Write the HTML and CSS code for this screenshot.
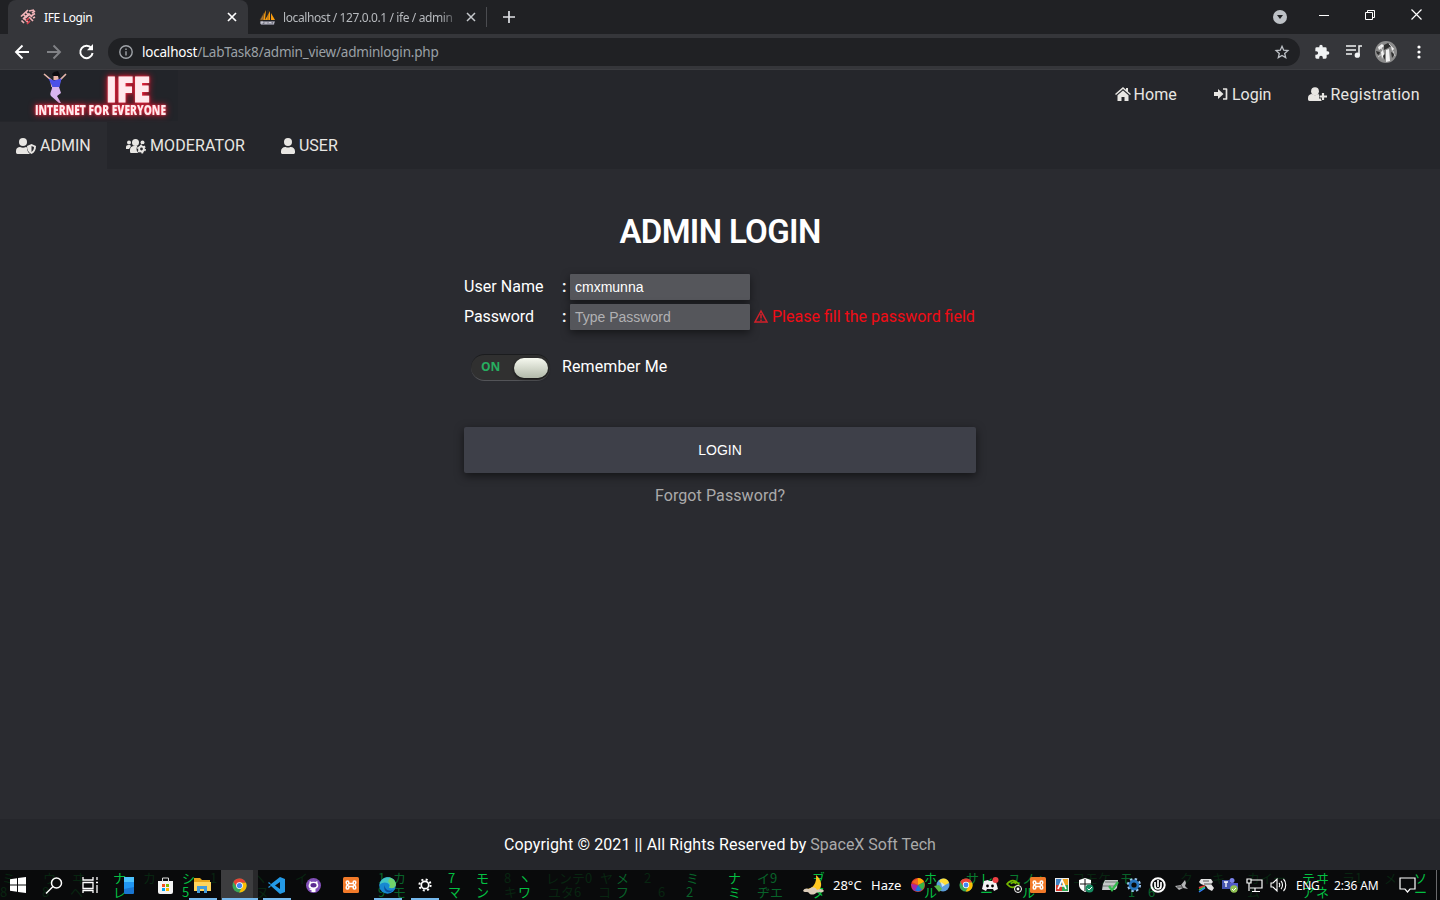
FILE: index.html
```html
<!DOCTYPE html>
<html lang="en">
<head>
<meta charset="utf-8">
<title>IFE Login</title>
<link rel="stylesheet" href="styles.css">
</head>
<body>
<svg width="0" height="0" class="defs">
  <symbol id="user" viewBox="0 0 448 512"><path d="M224 256a128 128 0 1 0 0-256 128 128 0 0 0 0 256zm90 32h-17a174 174 0 0 1-146 0h-17C60 288 0 348 0 422v42c0 26 22 48 48 48h352c26 0 48-22 48-48v-42c0-74-60-134-134-134z"/></symbol>
  <symbol id="chrome" viewBox="0 0 16 16"><circle cx="8" cy="8" r="7.500" fill="#3aa757"/><path d="M1.500 4.300A7.500 7.500 0 0 1 14.800 5H8L5 9.500z" fill="#e94235"/><path d="M8 5h6.900A7.500 7.500 0 0 1 7.600 15.500L11 9.500z" fill="#fbbc04"/><circle cx="8" cy="8" r="3.600" fill="#fff"/><circle cx="8" cy="8" r="2.800" fill="#4285f4"/></symbol>
  <symbol id="xampp" viewBox="0 0 16 16"><rect width="16" height="16" rx="1.500" fill="#f27a29"/><path d="M3.200 5.300c0-1.700 2.600-1.700 2.600 0v1.200h4.400V5.300c0-1.700 2.600-1.700 2.600 0 0 1.500-.6 2.200-1.600 2.700 1 .5 1.600 1.200 1.600 2.700 0 1.700-2.600 1.700-2.600 0V9.500H5.800v1.200c0 1.700-2.600 1.700-2.600 0 0-1.500.6-2.200 1.600-2.700-1-.5-1.600-1.200-1.600-2.700z" fill="#f27a29" stroke="#fff" stroke-width="1.500"/></symbol>
</svg>

<div class="screen">
  <div class="tabstrip">
    <div class="tab active">
      <svg width="16" height="16" viewBox="0 0 16 16" fill="none" stroke="#f3b5b9" stroke-width="1.700"><path d="M1 7.500L8 1M3.500 5.500L6 8M6 3.500L8.500 6M5 9l4-3.500"/><path d="M3 10l6-5 3 3M1.500 11.500L4 14M4 9.500l4 4M9 8l4 4M9 2l5-1M12 4l3-2M11 7l4-2.500M13 9l2-1"/><path d="M6 12l3-3M7 15l3-3" stroke="#d7404d"/></svg>
      <span class="tabname">IFE Login</span>
      <svg class="x" width="10" height="10" viewBox="0 0 10 10" stroke="#fff" stroke-width="1.700"><path d="M1 1l8 8M9 1L1 9"/></svg>
    </div>
    <div class="tab second">
      <svg width="17" height="17" viewBox="0 0 17 17"><path d="M7 1L2 11h4zM11 2L6 11h5zM12 4v7h4z" fill="#f89c0e"/><path d="M5 4L1 11h3zM9 1v10" fill="#b07a35" stroke="#604522" stroke-width=".6"/><path d="M1 12h15l-1 4H2z" fill="#73737f"/><path d="M2 15v-2h2v1H2m4 1v-2m0 1h2m0-1v2m2 0v-2l1 1 1-1v2m2 0l1-2" stroke="#dddde9" fill="none" stroke-width=".8"/></svg>
      <span class="tabname long">localhost / 127.0.0.1 / ife / admin</span>
      <svg class="x" width="10" height="10" viewBox="0 0 10 10" stroke="#c5c8cc" stroke-width="1.500"><path d="M1 1l8 8M9 1L1 9"/></svg>
    </div>
    <svg class="plus" width="12" height="12" viewBox="0 0 12 12" stroke="#dfe1e5" stroke-width="1.700"><path d="M6 0v12M0 6h12"/></svg>
    <div class="window-buttons">
      <svg class="drop" width="14" height="14" viewBox="0 0 14 14"><circle cx="7" cy="7" r="7" fill="#bdc1c6"/><path d="M4 5h6l-3 4z" fill="#202124"/></svg>
      <svg width="10" height="10" viewBox="0 0 10 10"><path d="M0 5.500h10" stroke="#fff"/></svg>
      <svg width="10" height="10" viewBox="0 0 10 10" fill="none" stroke="#fff"><path d="M.5 2.500h7v7h-7zM2.500 2.500v-2h7v7h-2"/></svg>
      <svg width="11" height="11" viewBox="0 0 11 11" stroke="#fff" stroke-width="1.200"><path d="M.5.5l10 10M10.500.5l-10 10"/></svg>
    </div>
  </div>

  <div class="toolbar">
    <svg width="14" height="14" viewBox="0 0 14 14" fill="none" stroke="#fff" stroke-width="1.900"><path d="M14 7H1M7.500.5L1 7l6.500 6.500"/></svg>
    <svg width="14" height="14" viewBox="0 0 14 14" fill="none" stroke="#818286" stroke-width="1.900"><path d="M0 7h13M6.500.5L13 7l-6.500 6.500"/></svg>
    <svg width="15" height="15" viewBox="0 0 15 15"><path d="M12.500 4.300A6.200 6.200 0 1 0 13.600 9" fill="none" stroke="#fff" stroke-width="2"/><path d="M14 0v6.300H8z" fill="#fff"/></svg>
    <div class="omnibox">
      <svg width="14" height="14" viewBox="0 0 14 14" fill="none" stroke="#a0a4a9" stroke-width="1.400"><circle cx="7" cy="7" r="6.200"/><path d="M7 6.200v4.300M7 3.500v1.500"/></svg>
      <span class="url"><b>localhost</b>/LabTask8/admin_view/adminlogin.php</span>
      <svg class="star" width="14" height="14" viewBox="0 0 14 14" fill="none" stroke="#bdc1c6" stroke-width="1.300"><path d="M7 1.300l1.700 3.900 4.200.4-3.200 2.800 1 4.200L7 10.400l-3.700 2.200 1-4.200L1.100 5.600l4.200-.4z"/></svg>
    </div>
    <div class="tools">
      <svg width="16" height="16" viewBox="0 0 24 24" fill="#f1f3f4"><path d="M20.500 11H19V7a2 2 0 0 0-2-2h-4V3.500a2.500 2.500 0 0 0-5 0V5H4a2 2 0 0 0-2 2v3.800h1.500a2.700 2.700 0 0 1 0 5.400H2V20a2 2 0 0 0 2 2h3.800v-1.500a2.700 2.700 0 0 1 5.400 0V22H17a2 2 0 0 0 2-2v-4h1.500a2.500 2.500 0 0 0 0-5z"/></svg>
      <svg width="16" height="13" viewBox="0 0 16 13" fill="none" stroke="#f1f3f4" stroke-width="1.500"><path d="M0 1h10M0 5h10M0 9h6M16 1h-3v9"/><circle cx="11.300" cy="10.200" r="1.900" fill="#f1f3f4"/></svg>
      <svg width="22" height="22" viewBox="0 0 22 22"><circle cx="11" cy="11" r="11" fill="#8c8c8c"/><path d="M3 6l4-3 2 2-5 4zM11 9l3-1 1 12-4 1zM6 11l2-2 1 4-2 5zM16 5l3 3-2 2z" fill="#f2f2f2"/><path d="M9 4l4-2 3 3-3 2-4 2zM1 10l4 1-1 3-2-1zM8 15l2-2v6zM16 11l4 2-3 4z" fill="#303030"/><path d="M3 16l4-3M14 3l5 5M5 5l3 5M18 10l2 5" stroke="#ddd" stroke-width=".8"/></svg>
      <svg width="4" height="14" viewBox="0 0 4 14" fill="#fff"><circle cx="2" cy="2" r="1.600"/><circle cx="2" cy="7" r="1.600"/><circle cx="2" cy="12" r="1.600"/></svg>
    </div>
  </div>

  <div class="page">
    <header>
      <div class="topbar">
        <svg class="logo" width="180" height="52" viewBox="0 0 180 52">
          <rect width="178" height="51" fill="#222429"/>
          <path d="M44 4l7 6 1 7M66 4l-6 6-2 7" fill="none" stroke="#e7b8ad" stroke-width="1.600"/>
          <path d="M53.500 5.500h5v4.500h-5z" fill="#e9b5aa"/><path d="M52 4l2-2 4-1 2 4-1 3-1-2h-5z" fill="#0b0b10"/>
          <path d="M48.500 8.500l5.500 2 7.500-2-2 8.500h-7z" fill="#4b51e8"/>
          <path d="M52 17h7l2 6-4 3 4 7h-2l-8-7c-2-3 1-5 1-9z" fill="#d8b5f1"/>
          <g class="neon"><text class="big" x="106" y="31.500" font-size="35" textLength="44" lengthAdjust="spacingAndGlyphs">IFE</text><text x="35" y="45" font-size="14" textLength="131" lengthAdjust="spacingAndGlyphs">INTERNET FOR EVERYONE</text></g>
        </svg>
        <nav class="links">
          <a><svg width="16" height="14" viewBox="0 0 16 14"><path d="M8 0l3 2.700V1h2v3.500L16 7l-1 1-7-6-7 6-1-1zM8 3.500l5.500 4.700V14H9.500v-4h-3v4h-4V8.200z"/></svg><span class="t-home">Home</span></a>
          <a><svg width="15" height="14" viewBox="0 0 15 14"><path d="M0 5h4V2l5.500 5L4 12V9H0z"/><path d="M9 2h3.500v10H9" fill="none" stroke="#e8e6e3" stroke-width="1.700" stroke-linejoin="round"/></svg><span class="t-login">Login</span></a>
          <a><svg width="19" height="15" viewBox="0 0 19 15"><circle cx="7" cy="4.200" r="3.900"/><path d="M0 11c0-3 2-4 4-4 2 1.500 4 1.500 6 0l2 1v2h2v4H1.500C.5 14 0 13 0 12z"/><path d="M15 5.500v8M11 9.500h8" stroke="#25262b" stroke-width="4"/><path d="M15 6v7M11.500 9.500h7.500" stroke="#e8e6e3" stroke-width="2.200"/></svg><span class="t-reg">Registration</span></a>
        </nav>
      </div>
      <nav class="roles">
        <a class="current"><svg width="20" height="16" viewBox="0 0 20 16"><circle cx="7" cy="4" r="4"/><path d="M0 13c0-3 2-4 4-4 2 1 4 1 6 0l1 .5c0 3 1 5 3 6.500H1.500C.5 16 0 15 0 14z"/><path d="M15.500 6l4.500 2c0 4-1.500 6.500-4.500 8-3-1.500-4.500-4-4.500-8z"/><path d="M15.500 8v6c1.500-1 2.500-2.500 2.500-4.900z" fill="#2a2b30"/></svg><span>ADMIN</span></a>
        <a class="mod"><svg width="20" height="16" viewBox="0 0 20 16"><circle cx="3" cy="4.500" r="2"/><circle cx="16.500" cy="4.500" r="2"/><circle cx="9.500" cy="4.500" r="3.500"/><path d="M0 9c0-2 2-2 4-2l1 1-2 3H0zM4 12c0-3 2-4 4-4h3l1 7H5c-1 0-1-1-1-2z"/><circle cx="15.500" cy="11" r="5" fill="#25262b"/><g fill="none" stroke="#e8e6e3"><circle cx="15.500" cy="11" r="2.400" stroke-width="2"/><circle cx="15.500" cy="11" r="3.700" stroke-width="1.500" stroke-dasharray="1.900 1.975"/></g></svg><span class="t-mod">MODERATOR</span></a>
        <a class="usr"><svg width="14" height="16"><use href="#user"/></svg><span>USER</span></a>
      </nav>
    </header>

    <main>
      <h1>ADMIN LOGIN</h1>
      <form class="form">
        <div class="row"><label class="t-name">User Name</label><span class="colon">:</span><div class="input">cmxmunna</div></div>
        <div class="row"><label class="t-pass">Password</label><span class="colon">:</span><div class="input hint">Type Password</div>
          <span class="error"><svg width="14" height="13" viewBox="0 0 14 13" fill="none" stroke="#d3202a" stroke-width="1.500"><path d="M7 1L1 12h12zM7 4v4.500M7 9.500V11"/></svg><span>Please fill the password field</span></span></div>
        <div class="remember"><div class="toggle"><span>ON</span><i></i></div><span class="t-rem">Remember Me</span></div>
        <div class="button">LOGIN</div>
        <a class="forgot">Forgot Password?</a>
      </form>
    </main>
    <footer><span class="copy">Copyright © 2021 || All Rights Reserved by</span><span class="brand">SpaceX Soft Tech</span></footer>
  </div>

  <div class="taskbar">
    <svg class="rain" width="1440" height="30" viewBox="0 0 1440 30">
      <g class="dim"><text x="2" y="13">ミ</text><text x="43" y="13">ウ</text><text x="72" y="13">ヰ</text><text x="0" y="27">8</text><text x="42" y="27">8</text><text x="70" y="27">ヘ</text><text x="143" y="13">カ</text><text x="210" y="13">1</text><text x="252" y="13">ヘ</text><text x="256" y="27">ヌ</text><text x="295" y="13">イ</text><text x="504" y="13">8</text><text x="504" y="27">キ</text><text x="546" y="13">レンテ0</text><text x="548" y="27">ユタ6</text><text x="600" y="13">ヤ</text><text x="598" y="27">コ</text><text x="644" y="13">2</text><text x="658" y="27">6</text><text x="1072" y="13">コモケ</text><text x="1180" y="13">ク</text><text x="1212" y="13">キ</text><text x="1247" y="13">カイー</text><text x="1247" y="27">ム</text><text x="1342" y="13">ラ1</text><text x="1384" y="13">メ</text></g>
      <g class="mid"><text x="378" y="13">1</text><text x="393" y="13">カ</text><text x="378" y="27">9</text><text x="393" y="27">モ</text><text x="616" y="13">メ</text><text x="616" y="27">フ</text><text x="686" y="13">ミ</text><text x="686" y="27">2</text><text x="757" y="13">イ9</text><text x="757" y="27">ヂエ</text><text x="1120" y="13">モ</text><text x="1128" y="27">1</text><text x="1148" y="27">6</text></g>
      <g class="lit"><text x="113" y="13">ナ</text><text x="113" y="27">レ</text><text x="182" y="13">シ</text><text x="182" y="27">5</text><text x="448" y="13">7</text><text x="448" y="27">マ</text><text x="476" y="13">モ</text><text x="476" y="27">ン</text><text x="518" y="13">ヽ</text><text x="518" y="27">ワ</text><text x="728" y="13">ナ</text><text x="728" y="27">ミ</text><text x="812" y="13">ヺ</text><text x="812" y="27">タ</text><text x="924" y="13">ホ</text><text x="924" y="27">ル</text><text x="980" y="13">レ</text><text x="980" y="27">ー</text><text x="1022" y="27">ル</text><text x="1302" y="13">テ</text><text x="1302" y="27">ア</text><text x="1316" y="13">ヰ</text><text x="1316" y="27">ネ</text><text x="1414" y="13">ソ</text><text x="1414" y="27">ー</text></g>
      <g class="soft"><text x="966" y="13">サ</text><text x="1008" y="13">ユ</text><text x="1022" y="13">ノ</text><text x="1036" y="13">ヽ</text></g>
    </svg>
    <div class="system">
      <div><svg width="16" height="16" viewBox="0 0 16 16" fill="#fff"><path d="M0 2.300L7 1.300v6.300H0zM8 1.100L16 0v7.600H8zM0 8.400h7v6.300l-7-1zM8 8.400h8V16l-8-1.100z"/></svg></div>
      <div><svg width="17" height="17" viewBox="0 0 17 17" fill="none" stroke="#fff" stroke-width="1.500"><circle cx="10.500" cy="6" r="5"/><path d="M7 9.500l-7 7"/></svg></div>
      <div><svg width="17" height="16" viewBox="0 0 17 16" fill="none" stroke="#fff" stroke-width="1.300"><path d="M1 0v3h10V0M1 5.500h10v6H1zM1 16v-2.500h10V16M15 0v3M15 8v8M14 5.500h2"/></svg></div>
    </div>
    <div class="apps">
      <div><svg width="10" height="17" viewBox="0 0 10 17"><rect width="10" height="17" rx="1" fill="#1976d2"/><path d="M0 0h10v5H0z" fill="#4cc2ff"/><path d="M0 5h10v5L0 12z" fill="#2196f3"/></svg></div>
      <div><svg width="15" height="17" viewBox="0 0 15 17"><path d="M0 4h15v11a2 2 0 0 1-2 2H2a2 2 0 0 1-2-2z" fill="#f4f4f4"/><path d="M4.500 5V1h6v4" fill="none" stroke="#ddd"/><path d="M4 7h3v3H4z" fill="#f25022"/><path d="M8 7h3v3H8z" fill="#7fba00"/><path d="M4 11h3v3H4z" fill="#00a4ef"/><path d="M8 11h3v3H8z" fill="#ffb900"/></svg></div>
      <div class="open"><svg width="17" height="15" viewBox="0 0 17 15"><path d="M0 0h6l2 2h8v4H0z" fill="#e9a51b"/><path d="M0 4h17v9H0z" fill="#ffd45c"/><path d="M3 15V8h10v7h-3v-4H6v4z" fill="#459dda"/></svg></div>
      <div class="open focus"><svg width="15" height="15"><use href="#chrome"/></svg></div>
      <div class="open"><svg width="17" height="17" viewBox="0 0 17 17"><path d="M12 0l5 2v13l-5 2-9-8-2 2-1-1 3-2-3-2 1-1 2 2zM12 5L7 8.500l5 3.500z" fill="#2499e5" fill-rule="evenodd"/></svg></div>
      <div><svg width="15" height="15" viewBox="0 0 15 15"><circle cx="7.500" cy="7.500" r="7.500" fill="#8250b8"/><path d="M3.700 3l2 1c1-.3 2.600-.3 3.600 0l2-1 .3 2.300C13.300 8 11.500 10.500 9.500 10.700V14h-4v-2C4 12.300 3.500 11 2.700 10.700c1-.3 1.800 1 3 .4C2.700 10.500 1.800 8 3.400 5.300z" fill="#fff"/><ellipse cx="7.500" cy="7.300" rx="3" ry="2.200" fill="#5c2b91"/></svg></div>
      <div><svg width="16" height="16"><use href="#xampp"/></svg></div>
      <div class="open"><svg width="17" height="17" viewBox="0 0 17 17"><circle cx="8.500" cy="8.500" r="8.300" fill="#1788d1"/><path d="M.5 8C2-2 16-2 16.800 7c0 4-4 5-7 3.500 3-3-4-8-9.300-2.500z" fill="#43c6c3"/><path d="M11 1c4 1 7 5 5.500 8-2 3-5 2-6.500 1.500 2-2 1-5-1-6z" fill="#71d46a"/><path d="M6 8c-1 4 4 7 8 5-4 5-11 1-8-5z" fill="#0b4e9b"/></svg></div>
      <div class="open"><svg width="14" height="14" viewBox="0 0 14 14" fill="none" stroke="#fff"><circle cx="7" cy="7" r="3.700" stroke-width="1.700"/><circle cx="7" cy="7" r="5.600" stroke-width="2" stroke-dasharray="2 2.400"/></svg></div>
    </div>
    <div class="weather">
      <svg width="21" height="20" viewBox="0 0 21 20"><path d="M13 0c6 5 7 12 2 16-4 3-10 1-12-2 7 0 11-6 10-14z" fill="#ffc71f"/><path d="M0 16c1-3 4-3 6-2 3-3 7-2 8 1 3-2 6-1 7 1-3 3-6 0-8 2s-6 2-7 0-4 0-6-2z" fill="#dacbb8"/></svg>
      <span class="temp">28°C</span><span class="haze">Haze</span>
    </div>
    <div class="tray">
      <svg viewBox="0 0 16 16"><circle cx="8" cy="8" r="7" fill="#e33828"/><path d="M8 8L8 1a7 7 0 0 1 6 4z" fill="#ffb000"/><path d="M8 8l6-3a7 7 0 0 1-2 8z" fill="#36b34a"/><path d="M8 8l4 5a7 7 0 0 1-8 0z" fill="#1676df"/><path d="M8 8L1 7l2 6 2 1z" fill="#a427a9"/><path d="M8 8L2 5l6-4z" fill="#f06922"/></svg>
      <svg viewBox="0 0 16 16"><circle cx="9" cy="8" r="6.500" fill="#5b9ddb"/><path d="M5 4c3-4 9-3 10 2l-6 3z" fill="#ffdf35"/><path d="M0 9l5-1 3 4-3 3z" fill="#59b947"/><path d="M7 5l4 3-3 2z" fill="#c9e6ff"/></svg>
      <svg viewBox="0 0 16 16"><use href="#chrome" x="1" y="1" width="14" height="14"/></svg>
      <svg viewBox="0 0 16 16"><path d="M2 4l4-1 1 1h3l1-1 3 2 2 7-4 2-1-2H5l-1 2-4-2z" fill="#f2f2f2"/><circle cx="5.500" cy="9" r="1.400"/><circle cx="10.500" cy="9" r="1.400"/><circle cx="13.500" cy="3" r="3" fill="#ed4245"/></svg>
      <svg viewBox="0 0 16 16"><path d="M1 7c4-5 8-4 12 0-4 4-8 5-12 0zM5 7c1-2 4-2 5 0" fill="none" stroke="#76b900" stroke-width="1.600"/><circle cx="12" cy="12" r="3.500" fill="#111" stroke="#fff"/><circle cx="12" cy="12" r="1.400" fill="#fff"/></svg>
      <svg viewBox="0 0 16 16"><use href="#xampp" width="16" height="16"/></svg>
      <svg viewBox="0 0 16 16"><path d="M1 1h14v14H1z" fill="#eee"/><path d="M2 2h6v6H2z" fill="#4181c2"/><path d="M8 2h6v6H8z" fill="#f0a421"/><path d="M2 8h6v6H2z" fill="#d83b2d"/><path d="M8 8h6v6H8z" fill="#34a853"/><path d="M4 12l4-9 4 9M6 9h4" fill="none" stroke="#fff" stroke-width="1.700"/></svg>
      <svg viewBox="0 0 16 16"><path d="M7 1l6 2v4c0 4-2 6-6 8-4-2-6-4-6-8V3z" fill="#fff"/><path d="M7 2v12M2 7h11" stroke="#111"/><circle cx="11.500" cy="11.500" r="4" fill="#168c60"/><path d="M9.500 11.500l1.500 1.500 3-3" stroke="#fff" fill="none"/></svg>
      <svg viewBox="0 0 16 16"><path d="M3 3h13l-1 8-2 2H0l1-6z" fill="#c5cac8"/><path d="M3 5h12M1 9h13" stroke="#727775"/><path d="M7 9l3 4 6-8" fill="none" stroke="#35ba4e" stroke-width="2.300"/></svg>
      <svg viewBox="0 0 16 16" fill="none"><circle cx="8" cy="8" r="5.800" stroke="#9ec7ed" stroke-width="2.500" stroke-dasharray="2.300 2.250"/><circle cx="8" cy="8" r="4" stroke="#2774bd" stroke-width="2.800"/></svg>
      <svg viewBox="0 0 16 16" fill="none" stroke="#fff"><circle cx="8" cy="8" r="6.700" stroke-width="2"/><path d="M5 5v4a3 3 0 0 0 6 0V5M8 3v7" stroke-width="1.700"/></svg>
      <svg viewBox="0 0 16 16"><path d="M1 9l6-1 4-5 1 3-1 3 3 3-5-1-4 2z" fill="#b4b5b7"/><path d="M7 8l2 3M3 10h5" stroke="#444"/></svg>
      <svg viewBox="0 0 16 16"><path d="M3 2h10l2 3-2 2 3 4-2 3-4-2-2-3-5-2-2-2z" fill="#e2e2e2"/><path d="M5 4h6M6 7h7" stroke="#555"/><path d="M1 11l6-2" stroke="#e23737" stroke-width="2"/><path d="M1 13l6-3" stroke="#29ce58" stroke-width="1.500"/><path d="M1 15l6-4" stroke="#337fff" stroke-width="1.500"/></svg>
      <svg viewBox="0 0 16 16"><circle cx="10" cy="3.500" r="2.500" fill="#7b83eb"/><path d="M8 6h8v6l-4 3-4-2z" fill="#5059c9"/><path d="M0 3h8v9H0z" fill="#4554af"/><path d="M2 5h4M4 5v5" stroke="#fff" stroke-width="1.300"/><circle cx="12" cy="12" r="3.700" fill="#92c353"/><path d="M10 12l1.500 1.500L14 11" stroke="#fff" fill="none"/></svg>
      <svg viewBox="0 0 16 16" fill="none" stroke="#fff" stroke-width="1.200"><path d="M5 3h11v8H4M9 11v3M6 14.500h8M1 2h4v4H1zM3 6v8"/></svg>
      <svg viewBox="0 0 16 16" fill="none" stroke="#fff" stroke-width="1.100"><path d="M1 6h2l4-4v12l-4-4H1zM9 6c1 1 1 3 0 4M11 4c2 2 2 6 0 8M13.500 2c3 3 3 9 0 12"/></svg>
    </div>
    <span class="lang">ENG</span><span class="clock">2:36 AM</span>
    <svg width="17" height="16" viewBox="0 0 17 16" fill="none" stroke="#fff" stroke-width="1.200"><path d="M1 1h15v11h-5L8.500 15 6 12H1z"/></svg>
    <i class="edge"></i>
  </div>
</div>
</body>
</html>
```
FILE: styles.css
```css
* { box-sizing: border-box; }
body { margin: 0; background: #2a2b30; color: #fff; font: 16px Roboto, sans-serif; overflow: hidden; }
svg { display: block; flex: none; overflow: visible; }
.defs { display: none; }
.screen { width: 1440px; height: 900px; display: grid; grid-template-columns: 1440px; grid-template-rows: 34px 36px 800px 30px; }
.tabstrip { background: #202124; display: flex; align-items: center; padding-left: 8px; font: 12px "Noto Sans", sans-serif; }
.tab { display: flex; align-items: center; height: 34px; }
.tab.active { width: 240px; background: #35363a; border-radius: 8px 8px 0 0; padding: 0 11px 0 12px; }
.tabname { margin-left: 8px; white-space: nowrap; letter-spacing: -.35px; }
.x { margin-left: auto; }
.second { width: 239px; height: 20px; border-right: 1px solid #4b4c50; padding: 0 10px 0 11px; color: #b7babe; }
.long { width: 178px; margin-left: 7px; overflow: hidden; letter-spacing: -.4px; mask-image: linear-gradient(90deg, #000 88%, transparent); }
.plus { margin-left: 16px; }
.window-buttons { margin-left: auto; display: flex; align-items: center; gap: 36px; padding: 0 18px 5px 0; }
.window-buttons .drop { margin: 5px -4px 0 0; }
.toolbar { background: #35363a; display: flex; align-items: center; padding-left: 15px; gap: 18px; border-bottom: 1px solid #3c3d41; }
.omnibox { width: 1192px; flex: none; height: 28px; background: #202124; border-radius: 14px; display: flex; align-items: center; padding: 0 11px; margin-left: -4px; }
.url { margin-left: 9px; color: #9aa0a6; font: 13.5px "Noto Sans", sans-serif; letter-spacing: -.21px; }
.url b { color: #fff; font-weight: 400; }
.star { margin-left: auto; }
.tools { display: flex; align-items: center; margin-left: -4px; gap: 16px; }
.tools svg:nth-child(3) { margin-left: -3px; }
.tools svg:nth-child(4) { margin-left: 4px; }

.page { display: grid; grid-template-rows: 99px 650px 51px; background: #2a2b30; }
header { background: #25262b; color: #e8e6e3; }
header svg { fill: #e8e6e3; }
.topbar { display: flex; justify-content: space-between; height: 52px; }
.neon { fill: #ffe9ed; font-family: "Open Sans", sans-serif; font-weight: 800; filter: drop-shadow(0 0 1px #f43b4e) drop-shadow(0 0 3px #d8102b); }
.big { stroke: #ffe9ed; stroke-width: 1.2px; }
.links { display: flex; padding: 0 20px 4px 0; gap: 37px; align-items: center; }
.links a, .roles a { display: flex; align-items: center; gap: 3px; white-space: nowrap; }
.roles { display: flex; height: 47px; align-items: center; }
.roles .current { width: 107px; height: 47px; padding-left: 16px; background: #2a2b30; gap: 4px; }
.roles .mod { margin-left: 19px; gap: 4px; }
.roles .usr { margin-left: 36px; gap: 4px; }
main { padding-top: 43px; }
h1 { margin: 0; height: 40px; font-size: 33px; line-height: 40px; font-weight: 600; text-align: center; letter-spacing: -.65px; }
.form { width: 512px; margin: 22px auto 0; display: flex; flex-direction: column; }
.row { display: flex; align-items: center; height: 26px; margin-bottom: 4px; white-space: nowrap; }
.row label { width: 98px; flex: none; padding-bottom: 1px; }
.colon { width: 8px; flex: none; font-weight: 700; padding-bottom: 1px; }
.input { width: 180px; flex: none; height: 26px; padding-left: 5px; background: #55565b; border-radius: 1px; box-shadow: 0 3px 9px rgba(0,0,0,.5); font: 14px/26px "Liberation Sans", Arial, sans-serif; }
.hint { color: #b1b1b3; }
.error { display: flex; align-items: center; gap: 4px; margin-left: 4px; color: #f10b15; padding-bottom: 1px; }
.remember { display: flex; align-items: center; margin-top: 20px; height: 27px; padding-left: 7px; gap: 12px; }
.toggle { width: 79px; height: 27px; border-radius: 14px; display: flex; align-items: center; justify-content: space-between; padding: 1px 2px 0 10px; background: #303030; border: solid; border-color: #1b1c1e transparent #535458; border-width: 1px 0; color: #27ae60; font: 700 12px "Open Sans", sans-serif; }
.toggle span { padding-bottom: 3px; }
.toggle i { width: 34px; height: 20px; border-radius: 10px; background: linear-gradient(#f6f8ef, #b2baaa); box-shadow: 0 1px 3px #111; }
.button { height: 46px; margin-top: 46px; background: #3e4049; border-radius: 2px; box-shadow: 0 3px 10px rgba(0,0,0,.55); text-align: center; font: 14px/46px "Liberation Sans", Arial, sans-serif; }
.forgot { margin-top: 13px; text-align: center; color: #aaa; letter-spacing: .1px; }
footer { background: #25262b; display: flex; align-items: center; justify-content: center; gap: 4px; }
.brand { color: #aaa; }
.t-home, .t-mod, .copy { letter-spacing: .1px; }
.t-reg { letter-spacing: .33px; }
.t-name { letter-spacing: .05px; }
.t-pass { letter-spacing: -.1px; }
.t-rem { letter-spacing: .1px; padding-bottom: 2px; }

.taskbar { position: relative; isolation: isolate; display: flex; align-items: center; background: #090a0b; font: 12px "Noto Sans", sans-serif; white-space: nowrap; }
.rain { position: absolute; inset: 0; z-index: -1; overflow: hidden; font: 13px "Noto Sans CJK JP", sans-serif; }
.dim { fill: #082511; }
.mid { fill: #08632a; }
.soft { fill: #087b2f; }
.lit { fill: #04bf42; }
.system { display: flex; }
.system div { width: 36px; height: 30px; display: grid; place-items: center; }
.apps { display: flex; margin-left: 2px; }
.apps div { width: 37px; height: 30px; display: grid; place-items: center; }
.apps .open { background: linear-gradient(#76b9ed, #76b9ed) center bottom / 28px 2px no-repeat; }
.apps .focus { background: linear-gradient(#76b9ed, #76b9ed) center bottom / 36px 2px no-repeat, linear-gradient(90deg, #3d3d3f 87%, #29292b 87%); }
.weather { display: flex; align-items: center; margin-left: 360px; font-size: 13px; }
.temp { width: 38px; margin-left: 9px; }
.haze { width: 39px; }
.tray { display: flex; gap: 8px; }
.tray svg { width: 16px; height: 16px; }
.lang { width: 38px; margin-left: 10px; letter-spacing: -.4px; }
.clock { width: 65px; letter-spacing: -.15px; }
.edge { width: 1px; height: 30px; background: #69696b; margin-left: 20px; }
```
